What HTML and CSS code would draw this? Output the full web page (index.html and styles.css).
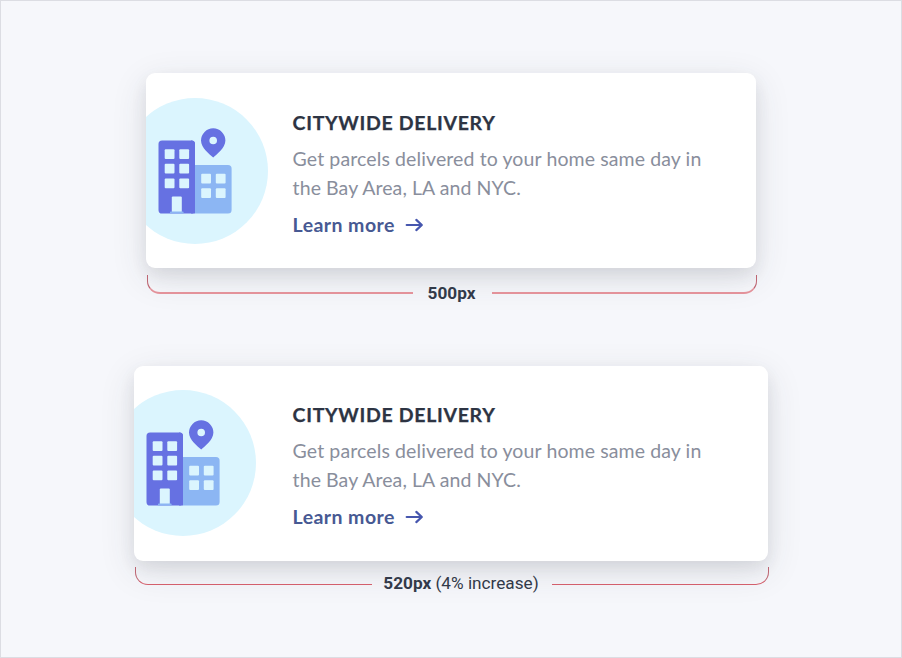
FILE: index.html
```
<!DOCTYPE html>
<html lang="en">
<head>
<meta charset="utf-8">
<title>Citywide Delivery</title>
<link rel="stylesheet" href="styles.css">
</head>
<body>
<svg class="defs" width="0" height="0" aria-hidden="true">
  <symbol id="city" viewBox="0 0 146 146">
    <circle cx="73" cy="73" r="73" fill="#dbf5fe"/>
    <path d="M73 67h33a3.6 3.6 0 0 1 3.6 3.6v41.4a3.6 3.6 0 0 1-3.6 3.6H73z" fill="#8cb6f3"/>
    <rect x="36.5" y="42.5" width="36.5" height="73" rx="3.6" fill="#6671e2"/>
    <path d="M69 42.5h.4a3.6 3.6 0 0 1 3.6 3.6v69.4h-4z" fill="#6671e2"/>
    <g fill="#dbf5fe">
      <rect x="42.7" y="51.2" width="9.8" height="9.8" rx="1"/><rect x="57.3" y="51.2" width="9.8" height="9.8" rx="1"/>
      <rect x="42.7" y="65.8" width="9.8" height="9.8" rx="1"/><rect x="57.3" y="65.8" width="9.8" height="9.8" rx="1"/>
      <rect x="42.7" y="80.4" width="9.8" height="9.8" rx="1"/><rect x="57.3" y="80.4" width="9.8" height="9.8" rx="1"/>
      <rect x="79.2" y="75.7" width="9.8" height="9.8" rx="1"/><rect x="93.8" y="75.7" width="9.8" height="9.8" rx="1"/>
      <rect x="79.2" y="90.3" width="9.8" height="9.8" rx="1"/><rect x="93.8" y="90.3" width="9.8" height="9.8" rx="1"/>
      <rect x="49.8" y="98.5" width="10" height="16" rx="1"/>
    </g>
    <rect x="48" y="113.5" width="13.6" height="2" rx=".8" fill="#8cb6f3"/>
    <path fill="#6671e2" fill-rule="evenodd" d="M91.2 59.6C88 56.4 79 50.2 79 42.5a12.2 12.2 0 0 1 24.4 0c0 7.7-9 13.9-12.2 17.1zM91.2 38.7a3.8 3.8 0 1 0 0 7.6a3.8 3.8 0 1 0 0-7.6z"/>
  </symbol>
  <symbol id="arrow" viewBox="0 0 18 14">
    <path d="M1.2 7H16M10.8 1.9L16.3 7l-5.5 5.1" fill="none" stroke="#4656ae" stroke-width="2.2" stroke-linecap="round" stroke-linejoin="round"/>
  </symbol>
</svg>
<main class="canvas">
  <section class="example example-base">
    <article class="card">
      <svg class="art"><use href="#city"/></svg>
      <div class="copy">
        <h2>CITYWIDE DELIVERY</h2>
        <p><span class="line line-first">Get parcels delivered to your home same day in</span><span class="line line-second">the Bay Area, LA and NYC.</span></p>
        <a class="more"><span>Learn more</span><svg class="arrow"><use href="#arrow"/></svg></a>
      </div>
    </article>
    <div class="measure"><i class="rule left"></i><span class="label"><b>500px</b></span><i class="rule right"></i></div>
  </section>
  <section class="example example-wide">
    <article class="card">
      <svg class="art"><use href="#city"/></svg>
      <div class="copy">
        <h2>CITYWIDE DELIVERY</h2>
        <p><span class="line line-first">Get parcels delivered to your home same day in</span><span class="line line-second">the Bay Area, LA and NYC.</span></p>
        <a class="more"><span>Learn more</span><svg class="arrow"><use href="#arrow"/></svg></a>
      </div>
    </article>
    <div class="measure"><i class="rule left"></i><span class="label"><b>520px</b> (4% increase)</span><i class="rule right"></i></div>
  </section>
</main>
</body>
</html>
```
FILE: styles.css
```
* { box-sizing: border-box; }
body { margin: 0; background: #f6f7fb; }
.defs { display: block; }
.canvas {
  width: 902px;
  height: 658px;
  padding-top: 72px;
  border: 1px solid #dcdde3;
  display: flex;
  flex-direction: column;
  align-items: center;
  overflow: hidden;
}
.example { height: 292.5px; flex: none; }
.example-base { width: 610px; }
.example-wide { width: 634px; }
.card {
  height: 195px;
  display: flex;
  background: #fff;
  border-radius: 9px;
  box-shadow: 0 10px 36px rgba(50, 54, 66, .12), 0 7px 16px rgba(50, 54, 66, .09);
  overflow: hidden;
}
.art { flex: none; width: 146px; height: 146px; margin: 24.5px 0 0 -24px; }
.copy { margin-left: 24.6px; padding-top: 34.6px; font-family: Lato, sans-serif; white-space: nowrap; }
.example-wide .copy { margin-left: 36.6px; }
h2 { margin: 0; font-size: 19.5px; line-height: 30px; font-weight: 700; letter-spacing: .68px; color: #2d3443; -webkit-text-stroke: .25px #2d3443; }
p { margin: 6.8px 0 0; font-size: 19.5px; line-height: 29px; color: #898e9c; }
.example-wide p { margin-top: 6.4px; }
.line { display: block; }
.line-first { letter-spacing: .11px; }
.line-second { letter-spacing: .08px; }
.more { display: flex; align-items: center; gap: 10px; margin-top: 7.6px; height: 29px; font-size: 19.5px; font-weight: 700; color: #475993; letter-spacing: .43px; }
.arrow { width: 19px; height: 14px; margin-top: 1px; }
.measure {
  display: flex;
  align-items: center;
  height: 35px;
  margin: 7px -1px 0 1px;
  font: 17.2px/20px Roboto, sans-serif;
  color: #323a49;
}
.measure .label { padding-top: 1px; width: 79px; text-align: center; white-space: nowrap; }
.example-base .label b { margin-right: 1px; }
.rule { flex: 1; height: 19px; align-self: flex-start; border-bottom: 2px solid #e3929a; }
.left { border-left: 1px solid #bd6572; border-bottom-left-radius: 13px; }
.right { border-right: 1px solid #bd6572; border-bottom-right-radius: 13px; }
.example-wide .measure { margin-top: 6px; }
.example-wide .rule { height: 18px; border-bottom: 1px solid #d35f6c; }
.example-wide .left { flex: none; width: 237px; }
.example-wide .measure .label { width: 180px; padding: 0 2px 3px 0; }
```
